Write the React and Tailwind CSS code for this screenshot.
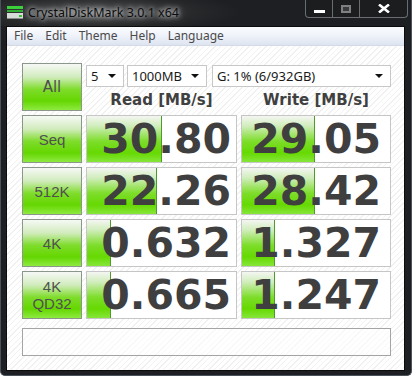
import React from 'react';

const rows = [
  { label: ['Seq'], read: '30.80', write: '29.05', rw: 75, ww: 73 },
  { label: ['512K'], read: '22.26', write: '28.42', rw: 70, ww: 73 },
  { label: ['4K'], read: '0.632', write: '1.327', rw: 24, ww: 33 },
  { label: ['4K', 'QD32'], read: '0.665', write: '1.247', rw: 24, ww: 33 },
];

const greenBtn =
  'border border-[#8c978c] bg-[linear-gradient(to_bottom,#f6f8f5_0%,#d2ecbe_28%,#7fdc2c_55%,#64d600_80%,#8eea40_100%)] flex flex-col items-center justify-center text-[#505050]';

const Dropdown = ({ children, className }) => (
  <div className={`h-[22px] border border-[#c8c8c8] bg-white flex items-center justify-between pl-[4px] pr-[7px] text-[13px] text-[#1a1a1a] font-['Noto_Sans',sans-serif] ${className}`}>
    <span className="leading-none">{children}</span>
    <svg width="8" height="4" viewBox="0 0 8 4"><path d="M0 0h8L4 4z" fill="#111" /></svg>
  </div>
);

const Cell = ({ value, fill, pr }) => (
  <div className="relative h-[48px] border border-[#c6c6c6] bg-white overflow-hidden">
    <div
      className="absolute left-0 top-0 bottom-0 border-r border-[#4e9a2c] bg-[linear-gradient(to_bottom,#f4f6f2_0%,#d0edbb_22%,#7ddd2a_55%,#66d902_80%,#86e63a_100%)]"
      style={{ width: fill }}
    />
    <div className={`relative h-full flex items-center justify-end ${pr} font-['DejaVu_Sans',sans-serif] font-bold text-[41px] leading-none text-[#3f3f3f]`}>
      {value}
    </div>
  </div>
);

export default function App() {
  return (
    <div className="w-[412px] h-[376px] bg-[#1d1f22] flex flex-col relative overflow-hidden border-x border-b border-[#4a525c] rounded-b-[5px]">
      {/* title bar */}
      <div className="h-[26px] flex items-center pl-[6px] bg-[radial-gradient(ellipse_150px_22px_at_90px_12px,#4a4c4e,#26282a_70%,#1d1f22)]">
        <svg width="16" height="14" viewBox="0 0 16 14">
          <rect x="0" y="0" width="16" height="3" fill="#3ccf3c" />
          <rect x="0" y="4" width="16" height="2" fill="#2fae2f" />
          <rect x="0" y="7" width="16" height="6" fill="#d8dcd8" />
          <rect x="0" y="12" width="16" height="1" fill="#8a8e8a" />
          <rect x="12" y="9" width="3" height="2" fill="#39c039" />
        </svg>
        <span className="ml-[5px] text-[12.5px] text-[#0c0c0c] font-['Noto_Sans',sans-serif] leading-none [text-shadow:0_0_5px_#ffffff,0_0_9px_rgba(255,255,255,0.7)]">
          CrystalDiskMark 3.0.1 x64
        </span>
      </div>

      {/* caption buttons */}
      <div className="absolute top-0 right-[3px] h-[18px] flex border border-t-0 border-[#6a6d70] rounded-b-[4px] overflow-hidden bg-[#1c1d1f]">
        <div className="w-[27px] flex items-center justify-center border-r border-[#6a6d70]">
          <div className="w-[11px] h-[3px] bg-white mt-[5px]" />
        </div>
        <div className="w-[27px] flex items-center justify-center border-r border-[#6a6d70]">
          <div className="w-[10px] h-[8px] bg-[#7e8082] flex items-center justify-center">
            <div className="w-[6px] h-[4px] bg-[#3a3b3c]" />
          </div>
        </div>
        <div className="w-[47px] flex items-center justify-center">
          <svg width="12" height="9" viewBox="0 0 12 9">
            <path d="M1 0.5l10 8M11 0.5l-10 8" stroke="#fff" strokeWidth="2.6" />
          </svg>
        </div>
      </div>

      {/* client */}
      <div className="flex-1 ml-[5px] mr-[6px] mb-[4px] border border-[#0c0c0c] flex flex-col bg-white">
        <div className="h-[19px] flex items-center pl-[7px] gap-[12px] border-b border-[#d5dbe5] bg-[linear-gradient(to_bottom,#fbfcfe,#eef2f9_50%,#dde4f1)] text-[12px] text-[#4a4a4a] font-['Noto_Sans',sans-serif]">
          <span>File</span>
          <span>Edit</span>
          <span>Theme</span>
          <span>Help</span>
          <span>Language</span>
        </div>

        <div className="flex-1 pt-[17px] pl-[15px] pr-[12px] bg-[repeating-linear-gradient(135deg,#ffffff_0px,#ffffff_3px,#f1f1f1_3px,#f1f1f1_4px)]">
          <div className="grid grid-cols-[60px_151px_150px] gap-x-[4px] gap-y-[4px]">
            <div className={`h-[48px] ${greenBtn} font-['DejaVu_Sans',sans-serif] text-[15px]`}>All</div>
            <div className="col-span-2 flex flex-col">
              <div className="flex pt-[2px]">
                <Dropdown className="w-[38px]">5</Dropdown>
                <Dropdown className="w-[80px] ml-[3px]">1000MB</Dropdown>
                <Dropdown className="w-[179px] ml-[5px]">G: 1% (6/932GB)</Dropdown>
              </div>
              <div className="flex mt-[6px] font-['DejaVu_Sans',sans-serif] font-bold text-[15px] leading-none text-[#404040]">
                <div className="w-[151px] text-center">Read [MB/s]</div>
                <div className="w-[150px] ml-[4px] text-center">Write [MB/s]</div>
              </div>
            </div>

            {rows.map((r) => (
              <React.Fragment key={r.read}>
                <div className={`h-[48px] ${greenBtn} font-['Liberation_Sans',sans-serif] text-[15px] leading-[17px]`}>
                  {r.label.map((l) => (
                    <span key={l}>{l}</span>
                  ))}
                </div>
                <Cell value={r.read} fill={r.rw} pr="pr-[5px]" />
                <Cell value={r.write} fill={r.ww} pr="pr-[9px]" />
              </React.Fragment>
            ))}
          </div>

          <div className="mt-[9px] w-[369px] h-[28px] border border-[#a4a4a4] bg-white/50" />
        </div>
      </div>
    </div>
  );
}
